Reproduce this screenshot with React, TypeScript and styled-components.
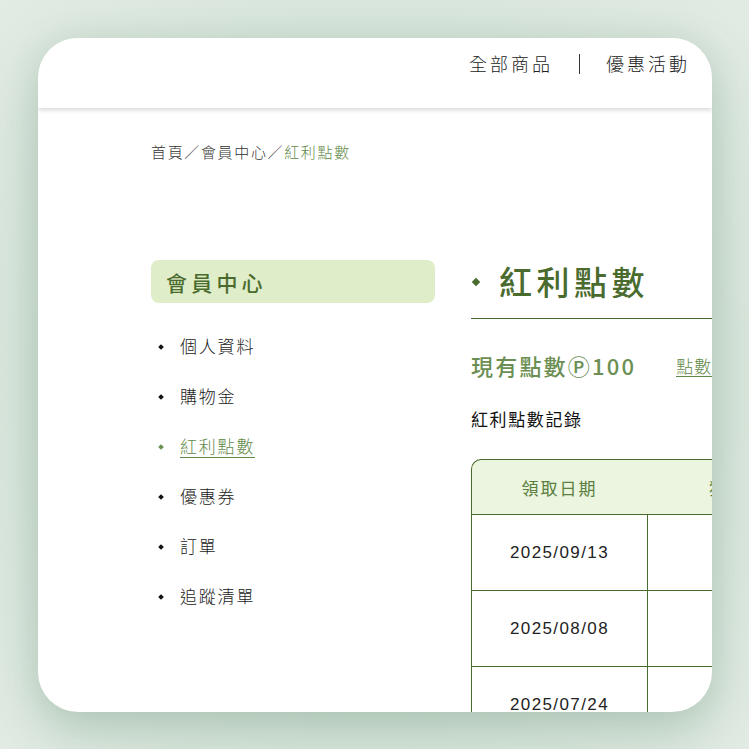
import React from "react";
import styled, { createGlobalStyle } from "styled-components";

const Global = createGlobalStyle`
  html, body { margin: 0; padding: 0; }
  body {
    width: 749px;
    height: 749px;
    overflow: hidden;
    background: radial-gradient(circle at 50% 50%, #c9dccf 0%, #d6e4da 60%, #e2ebe4 100%);
    font-family: "Noto Sans CJK TC", "Noto Sans", sans-serif;
  }
`;

const Stage = styled.div`
  width: 749px;
  height: 749px;
  box-sizing: border-box;
  padding: 38px 37px 37px 38px;
`;

const Card = styled.div`
  width: 674px;
  height: 674px;
  background: #fff;
  border-radius: 40px;
  overflow: hidden;
  box-shadow: 0 22px 50px rgba(90, 135, 105, 0.28), 0 0 30px rgba(90, 135, 105, 0.12);
  display: flex;
  flex-direction: column;
`;

const Header = styled.header`
  position: relative;
  z-index: 1;
  flex: 0 0 70px;
  box-sizing: border-box;
  padding: 12px 22px 0;
  display: flex;
  justify-content: flex-end;
  align-items: flex-start;
  gap: 26px;
  background: #fff;
  box-shadow: 0 2px 5px rgba(0, 0, 0, 0.16);
`;

const NavLink = styled.a`
  font-size: 18px;
  line-height: 27px;
  letter-spacing: 3px;
  color: #222;
  text-decoration: none;
  font-weight: 300;
`;

const NavSep = styled.span`
  width: 1px;
  height: 20px;
  margin-top: 4px;
  background: #333;
`;

const Content = styled.div`
  width: 1000px;
  padding: 33px 0 0 113px;
  box-sizing: border-box;
`;

const Crumbs = styled.nav`
  font-size: 15px;
  line-height: 22px;
  letter-spacing: 1.65px;
  font-weight: 300;
  color: #333;
`;

const CrumbCurrent = styled.span`
  color: #5f8a47;
`;

const Layout = styled.div`
  margin-top: 97px;
  display: flex;
  gap: 36px;
  align-items: flex-start;
`;

const Sidebar = styled.aside`
  width: 284px;
  flex: 0 0 284px;
`;

const SideTitle = styled.div`
  height: 43px;
  box-sizing: border-box;
  padding-left: 15px;
  border-radius: 8px;
  background: #dfedc8;
  color: #4a6b2e;
  font-size: 21px;
  font-weight: 500;
  letter-spacing: 4.2px;
  display: flex;
  align-items: center;
`;

const SideList = styled.ul`
  list-style: none;
  margin: 18px 0 0;
  padding: 0;
`;

const SideItem = styled.li<{ $active?: boolean }>`
  height: 50px;
  display: flex;
  align-items: center;
  gap: 17px;
  padding-left: 8px;
  font-size: 17px;
  font-weight: 300;
  letter-spacing: 1.8px;
  color: ${(p) => (p.$active ? "#5f8a47" : "#222")};

  &::before {
    content: "";
    width: 4px;
    height: 4px;
    background: ${(p) => (p.$active ? "#6d9152" : "#111")};
    transform: rotate(45deg);
    margin-top: 1px;
  }
`;

const SideText = styled.span<{ $active?: boolean }>`
  border-bottom: ${(p) => (p.$active ? "1.5px solid #5f8a47" : "none")};
  line-height: 22px;
`;

const Main = styled.main`
  flex: 1;
`;

const Title = styled.h1`
  margin: 0;
  display: flex;
  align-items: center;
  gap: 20px;
  padding-bottom: 15px;
  border-bottom: 1px solid #4a6b2e;
  font-size: 33px;
  line-height: 43px;
  font-weight: 500;
  letter-spacing: 4.5px;
  color: #4a6b2e;

  &::before {
    content: "";
    width: 6px;
    height: 6px;
    margin-left: 2px;
    background: #4a6b2e;
    transform: rotate(45deg);
  }
`;

const PointsRow = styled.div`
  margin-top: 31px;
  display: flex;
  align-items: center;
  gap: 40px;
`;

const Points = styled.div`
  font-size: 22px;
  line-height: 30px;
  font-weight: 500;
  letter-spacing: 2.2px;
  color: #6b8f52;
`;

const PointsLink = styled.a`
  font-size: 17px;
  font-weight: 300;
  letter-spacing: 1px;
  color: #5f8a47;
  text-decoration: none;
  border-bottom: 1.5px solid #5f8a47;
  line-height: 20px;
  margin-top: 2px;
`;

const SubTitle = styled.h2`
  margin: 26px 0 0;
  font-size: 17px;
  line-height: 25px;
  font-weight: 400;
  letter-spacing: 1.6px;
  color: #111;
`;

const Table = styled.table`
  margin-top: 28px;
  border-collapse: separate;
  border-spacing: 0;
  width: 500px;
  table-layout: fixed;
`;

const Th = styled.th<{ $first?: boolean }>`
  height: 56px;
  box-sizing: border-box;
  background: #ebf5df;
  color: #5b7f40;
  font-size: 17px;
  font-weight: 400;
  letter-spacing: 2px;
  border-top: 1px solid #4a6b2e;
  border-bottom: 1px solid #4a6b2e;
  border-left: ${(p) => (p.$first ? "1px solid #4a6b2e" : "none")};
  border-top-left-radius: ${(p) => (p.$first ? "10px" : "0")};
`;

const Td = styled.td`
  height: 76px;
  box-sizing: border-box;
  padding: 0;
  text-align: center;
  font-family: "Liberation Sans", Arial, sans-serif;
  font-size: 17px;
  letter-spacing: 1.4px;
  color: #222;
  border-bottom: 1px solid #4a6b2e;
  border-left: 1px solid #4a6b2e;
`;

const rows = ["2025/09/13", "2025/08/08", "2025/07/24"];

export default function App() {
  return (
    <>
      <Global />
      <Stage>
        <Card>
          <Header>
            <NavLink>全部商品</NavLink>
            <NavSep />
            <NavLink>優惠活動</NavLink>
          </Header>
          <Content>
            <Crumbs>
              首頁／會員中心／<CrumbCurrent>紅利點數</CrumbCurrent>
            </Crumbs>
            <Layout>
              <Sidebar>
                <SideTitle>會員中心</SideTitle>
                <SideList>
                  <SideItem><SideText>個人資料</SideText></SideItem>
                  <SideItem><SideText>購物金</SideText></SideItem>
                  <SideItem $active><SideText $active>紅利點數</SideText></SideItem>
                  <SideItem><SideText>優惠券</SideText></SideItem>
                  <SideItem><SideText>訂單</SideText></SideItem>
                  <SideItem><SideText>追蹤清單</SideText></SideItem>
                </SideList>
              </Sidebar>
              <Main>
                <Title>紅利點數</Title>
                <PointsRow>
                  <Points>現有點數Ⓟ100</Points>
                  <PointsLink>點數說明</PointsLink>
                </PointsRow>
                <SubTitle>紅利點數記錄</SubTitle>
                <Table>
                  <colgroup>
                    <col style={{ width: 176 }} />
                    <col style={{ width: 200 }} />
                    <col style={{ width: 124 }} />
                  </colgroup>
                  <thead>
                    <tr>
                      <Th $first>領取日期</Th>
                      <Th>獲得點數</Th>
                      <Th>到期日</Th>
                    </tr>
                  </thead>
                  <tbody>
                    {rows.map((d) => (
                      <tr key={d}>
                        <Td>{d}</Td>
                        <Td>+100</Td>
                        <Td>2026/12/31</Td>
                      </tr>
                    ))}
                  </tbody>
                </Table>
              </Main>
            </Layout>
          </Content>
        </Card>
      </Stage>
    </>
  );
}
